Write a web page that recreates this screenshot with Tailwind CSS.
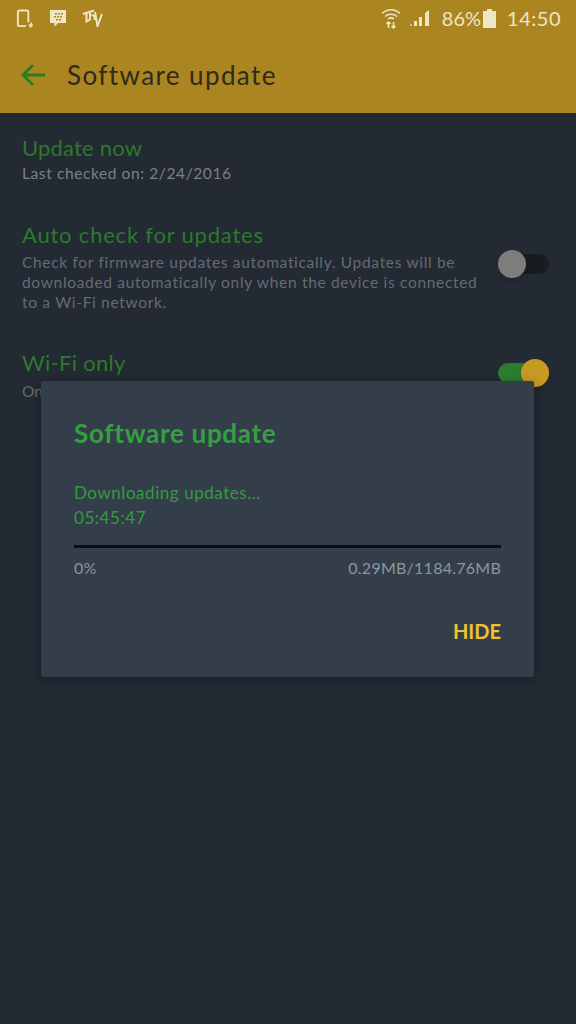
<!DOCTYPE html>
<html lang="en">
<head>
    <meta charset="UTF-8">
    <meta name="viewport" content="width=device-width, initial-scale=1.0">
    <title>Software update</title>
    <script src="https://cdn.jsdelivr.net/npm/@tailwindcss/browser@4"></script>
</head>
<body class="relative w-[576px] h-[1024px] overflow-hidden bg-[#232a33] font-['Lato',sans-serif]">

    <!-- app bar with status icons -->
    <header class="h-[113px] bg-[#aa8520]">
        <div class="h-[36px] pl-[16px] pr-[15px] flex items-center text-[#efe6c4]">
            <svg class="w-[18px] h-[19px] mr-[15px]" viewBox="0 0 18 20" fill="none" stroke="currentColor" stroke-width="2">
                <path d="M10 18H3a1.5 1.5 0 0 1-1.500-1.500V3A1.500 1.500 0 0 1 3 1.500h8A1.500 1.500 0 0 1 12.500 3v11"/>
                <path d="M13 17h3.500m-1.500-2.500 1.500 2.500-2.500 2.500" stroke-width="1.700"/>
            </svg>
            <svg class="w-[18px] h-[19px] mr-[15px]" viewBox="0 0 18 19">
                <path d="M1 1h16v13H9l-3.500 4V14H1z" fill="currentColor"/>
                <g fill="#aa8520">
                    <rect x="6" y="4" width="2" height="1.500"/><rect x="9" y="4" width="2" height="1.500"/><rect x="12" y="4" width="2" height="1.500"/>
                    <rect x="5" y="7" width="2" height="1.500"/><rect x="8" y="7" width="2" height="1.500"/><rect x="11" y="7" width="2" height="1.500"/>
                    <rect x="7" y="10" width="2" height="1.500"/><rect x="10" y="10" width="2" height="1.500"/>
                </g>
            </svg>
            <svg class="w-[21px] h-[18px]" viewBox="0 0 21 18" fill="none" stroke="currentColor" stroke-width="2">
                <path d="M1 5 12 1.500M4.500 4v8.500L8 10.500V3M9.500 6c3 0 3.500 2.500 3 5M13 3l2.500 14L20 5"/>
            </svg>
            <div class="ml-auto flex items-center">
                <svg class="w-[20px] h-[22px] mr-[9px]" viewBox="0 0 20 22" fill="none" stroke="currentColor" stroke-width="1.500">
                    <path d="M1 6.500C6 1.500 14 1.500 19 6.500M4 9.500c3.500-3 8.500-3 12 0M7 12c2-1.500 4-1.500 6 0"/>
                    <path d="M7.500 15v6m-2-4 2-2 2 2M12.500 21v-6m-2 4 2 2 2-2" stroke-width="1.600"/>
                </svg>
                <svg class="w-[20px] h-[18px] mr-[12px]" viewBox="0 0 20 18" fill="currentColor">
                    <rect x="0" y="15" width="2" height="2" opacity=".6"/>
                    <rect x="4" y="12" width="3" height="5"/>
                    <rect x="9" y="8" width="3" height="9"/>
                    <path d="M15 4l4-3v16h-4z"/>
                </svg>
                <span class="text-[20px] leading-none mr-[2px]">86%</span>
                <svg class="w-[13px] h-[19px] mr-[11px]" viewBox="0 0 13 19" fill="currentColor">
                    <path d="M4 0h5v2h4v17H0V2h4z"/>
                </svg>
                <span class="text-[20px] leading-none tracking-[0.5px]">14:50</span>
            </div>
        </div>
        <div class="h-[77px] pl-[21px] flex items-center">
            <svg class="w-[25px] h-[22px] mr-[21px]" viewBox="0 0 25 22" fill="none" stroke="#2d7a26" stroke-width="2.800">
                <path d="M24 11H2M12 1 2 11l10 10"/>
            </svg>
            <h1 class="text-[26px] leading-none text-[#2f2a1e] tracking-[1.4px]">Software update</h1>
        </div>
    </header>

    <!-- settings list -->
    <main class="pl-[22px] pr-[27px]">
        <section class="pt-[21px]">
            <h2 class="text-[22px] leading-[28px] tracking-[0.2px] text-[#2c7a2c]">Update now</h2>
            <p class="text-[15.500px] leading-[20px] mt-[1px] tracking-[0.6px] text-[#7c8085]">Last checked on: 2/24/2016</p>
        </section>
        <section class="mt-[38px] flex items-start">
            <div class="w-[460px]">
                <h2 class="text-[22px] leading-[28px] tracking-[0.8px] text-[#2c7a2c]">Auto check for updates</h2>
                <p class="text-[15.500px] leading-[20px] mt-[3px] tracking-[0.68px] text-[#666b71]">Check for firmware updates automatically. Updates will be downloaded automatically only when the device is connected to a Wi-Fi network.</p>
            </div>
            <div class="relative ml-auto mt-[33px] w-[51px] h-[20px] rounded-full bg-[#181c21]">
                <div class="absolute left-0 top-[-4px] w-[28px] h-[28px] rounded-full bg-[#7d7d7d] shadow-md"></div>
            </div>
        </section>
        <section class="mt-[37px] flex items-start">
            <div>
                <h2 class="text-[22px] leading-[28px] tracking-[0.3px] text-[#2c7a2c]">Wi-Fi only</h2>
                <p class="text-[15.500px] leading-[20px] mt-[4px] text-[#666b71]">On</p>
            </div>
            <div class="relative ml-auto mt-[14px] w-[51px] h-[20px] rounded-full bg-[#2c7d2e]">
                <div class="absolute right-0 top-[-4px] w-[28px] h-[28px] rounded-full bg-[#c99a22] shadow-md"></div>
            </div>
        </section>
    </main>

    <!-- download dialog -->
    <div class="absolute left-[41px] top-[381px] w-[493px] h-[296px] bg-[#343e4a] rounded-[2px] shadow-[0_2px_10px_rgba(0,0,0,0.35)] px-[33px] pt-[36px]">
        <h3 class="text-[26px] leading-[32px] font-bold tracking-[0.7px] text-[#35a041]">Software update</h3>
        <p class="mt-[31px] text-[17px] leading-[25px] tracking-[0.55px] text-[#349a3f]">Downloading updates...<br>05:45:47</p>
        <div class="mt-[15px] h-[2.500px] bg-[#0b0d10]"></div>
        <div class="mt-[10px] flex justify-between text-[16px] leading-[20px] tracking-[0.25px] text-[#8f959c]">
            <span>0%</span>
            <span>0.29MB/1184.76MB</span>
        </div>
        <div class="mt-[41px] flex justify-end">
            <button class="text-[20px] leading-[24px] font-bold text-[#efc32f]">HIDE</button>
        </div>
    </div>
</body>
</html>
